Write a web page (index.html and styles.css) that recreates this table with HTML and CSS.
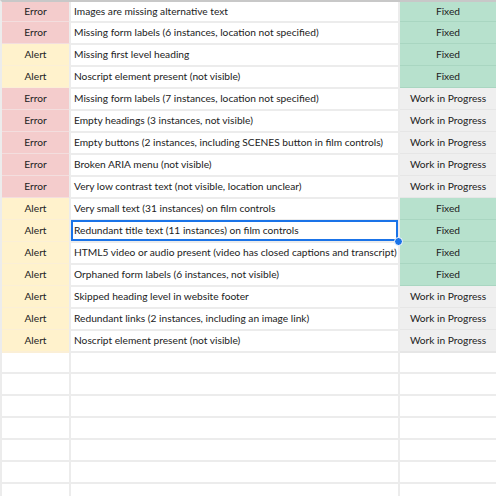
FILE: index.html
```
<!DOCTYPE html>
<html>
<head>
<meta charset="utf-8">
<link rel="stylesheet" href="styles.css">
</head>
<body>
<div class="sheet">
  <div class="row"><div class="c1 err">Error</div><div class="c2">Images are missing alternative text</div><div class="c3 fixed">Fixed</div></div>
  <div class="row"><div class="c1 err">Error</div><div class="c2">Missing form labels (6 instances, location not specified)</div><div class="c3 fixed">Fixed</div></div>
  <div class="row"><div class="c1 alert">Alert</div><div class="c2">Missing first level heading</div><div class="c3 fixed">Fixed</div></div>
  <div class="row"><div class="c1 alert">Alert</div><div class="c2">Noscript element present (not visible)</div><div class="c3 fixed">Fixed</div></div>
  <div class="row"><div class="c1 err">Error</div><div class="c2">Missing form labels (7 instances, location not specified)</div><div class="c3 wip">Work in Progress</div></div>
  <div class="row"><div class="c1 err">Error</div><div class="c2">Empty headings (3 instances, not visible)</div><div class="c3 wip">Work in Progress</div></div>
  <div class="row"><div class="c1 err">Error</div><div class="c2">Empty buttons (2 instances, including SCENES button in film controls)</div><div class="c3 wip">Work in Progress</div></div>
  <div class="row"><div class="c1 err">Error</div><div class="c2">Broken ARIA menu (not visible)</div><div class="c3 wip">Work in Progress</div></div>
  <div class="row"><div class="c1 err">Error</div><div class="c2">Very low contrast text (not visible, location unclear)</div><div class="c3 wip">Work in Progress</div></div>
  <div class="row"><div class="c1 alert">Alert</div><div class="c2">Very small text (31 instances) on film controls</div><div class="c3 fixed">Fixed</div></div>
  <div class="row"><div class="c1 alert">Alert</div><div class="c2 selected">Redundant title text (11 instances) on film controls<span class="handle"></span></div><div class="c3 fixed">Fixed</div></div>
  <div class="row"><div class="c1 alert">Alert</div><div class="c2">HTML5 video or audio present (video has closed captions and transcript)</div><div class="c3 fixed">Fixed</div></div>
  <div class="row"><div class="c1 alert">Alert</div><div class="c2">Orphaned form labels (6 instances, not visible)</div><div class="c3 fixed">Fixed</div></div>
  <div class="row"><div class="c1 alert">Alert</div><div class="c2">Skipped heading level in website footer</div><div class="c3 wip">Work in Progress</div></div>
  <div class="row"><div class="c1 alert">Alert</div><div class="c2">Redundant links (2 instances, including an image link)</div><div class="c3 wip">Work in Progress</div></div>
  <div class="row"><div class="c1 alert">Alert</div><div class="c2">Noscript element present (not visible)</div><div class="c3 wip">Work in Progress</div></div>
  <div class="row"><div class="c1"></div><div class="c2"></div><div class="c3"></div></div>
  <div class="row"><div class="c1"></div><div class="c2"></div><div class="c3"></div></div>
  <div class="row"><div class="c1"></div><div class="c2"></div><div class="c3"></div></div>
  <div class="row"><div class="c1"></div><div class="c2"></div><div class="c3"></div></div>
  <div class="row"><div class="c1"></div><div class="c2"></div><div class="c3"></div></div>
  <div class="row"><div class="c1"></div><div class="c2"></div><div class="c3"></div></div>
  <div class="row"><div class="c1"></div><div class="c2"></div><div class="c3"></div></div>
</div>
</body>
</html>
```
FILE: styles.css
```
html, body {
  margin: 0;
  padding: 0;
  background: #fff;
  overflow: hidden;
}
.sheet {
  font-family: "Lato", "Noto Sans", sans-serif;
  font-size: 10.2px;
  color: #222;
  border-top: 2px solid #c8c8c8;
  border-left: 2px solid #ececec;
  width: 494px;
}
.row {
  display: grid;
  grid-template-columns: 69px 329px 1fr;
  height: 22px;
}
.row:first-child {
  height: 20px;
}
.row > div {
  border-right: 2px solid #ececec;
  border-bottom: 2px solid #ececec;
  line-height: 21px;
  white-space: nowrap;
}
.row:first-child > div {
  line-height: 19px;
}
.c1, .c3 {
  text-align: center;
}
.c2 {
  padding-left: 3px;
  position: relative;
}
.err { background: #f4cccc; }
.alert { background: #fff2cc; }
.fixed { background: #b7e1cd; }
.wip { background: #efefef; }
.row > .err { border-bottom-color: #f3dede; }
.row > .alert { border-bottom-color: #fbefd6; }
.row > .fixed { border-bottom-color: #a9d6c1; }
.row > .wip { border-bottom-color: #e6e6e6; }
.c3 { border-right: none !important; }
.selected {
  box-shadow: inset 0 0 0 2px #1a73e8;
}
.handle {
  position: absolute;
  right: -5px;
  bottom: -5px;
  width: 7px;
  height: 7px;
  border-radius: 50%;
  background: #1a73e8;
  border: 1px solid #fff;
  z-index: 2;
}
```
